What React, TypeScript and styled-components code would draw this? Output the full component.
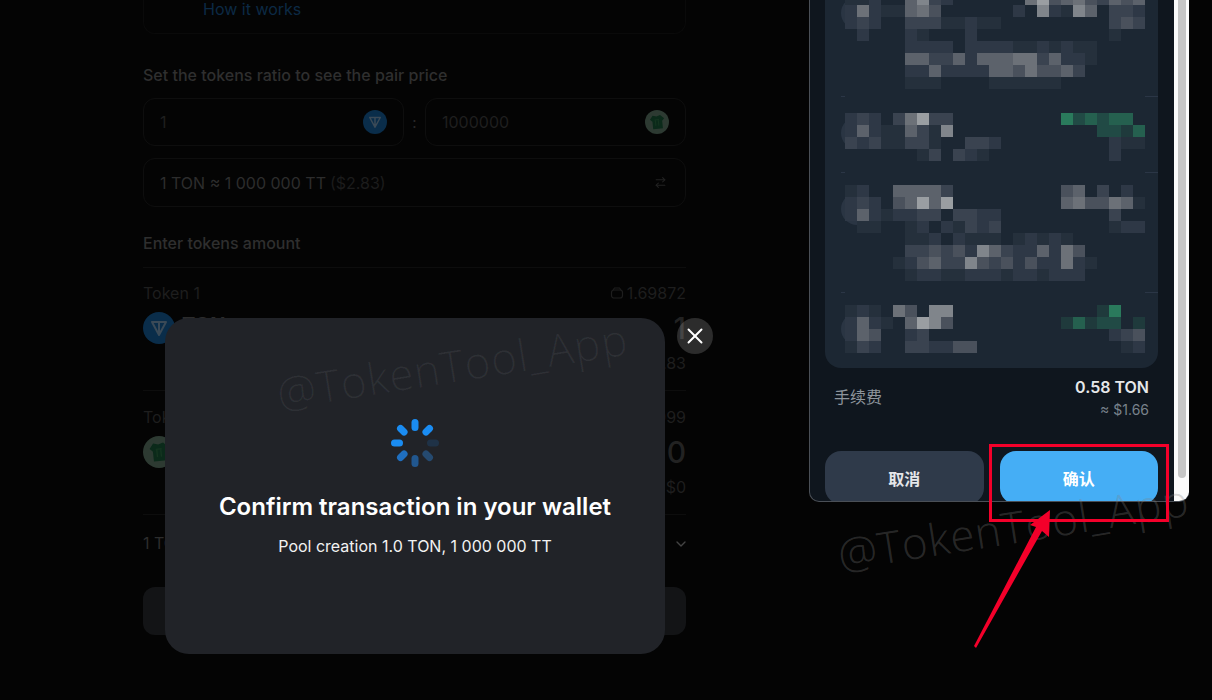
import React from 'react';
import styled, { createGlobalStyle } from 'styled-components';
import { ArrowRightLeft, ChevronDown, X } from 'lucide-react';

const GlobalStyle = createGlobalStyle`
  html, body {
    margin: 0;
    padding: 0;
    background: #040404;
    font-family: Inter, "Noto Sans CJK SC", sans-serif;
  }
`;

const Page = styled.div`
  position: relative;
  display: flex;
  align-items: flex-start;
  width: 1212px;
  height: 700px;
  overflow: hidden;
  background: #040404;
`;

/* dimmed page behind the modal */
const Column = styled.div`
  display: flex;
  flex-direction: column;
  width: 543px;
  margin-left: 143px;
`;

const HowCard = styled.div`
  box-sizing: border-box;
  height: 34px;
  padding-left: 59px;
  border: 1px solid #0a0a0a;
  border-top: none;
  border-radius: 0 0 12px 12px;
  color: #0c2a45;
  font-size: 16px;
  line-height: 18px;
`;

const SectionTitle = styled.div<{ $top: number }>`
  margin-top: ${p => p.$top}px;
  color: #2f2f2f;
  font-size: 16px;
  font-weight: 500;
  line-height: 20px;
`;

const RatioRow = styled.div`
  display: flex;
  align-items: center;
  margin-top: 13px;
`;

const Field = styled.div`
  flex: 1;
  box-sizing: border-box;
  display: flex;
  align-items: center;
  justify-content: space-between;
  height: 48px;
  padding: 0 16px;
  border: 1px solid #0e0e0e;
  border-radius: 12px;
  color: #1f1f1f;
  font-size: 16px;
`;

const Colon = styled.div`
  width: 21px;
  color: #2a2a2a;
  font-size: 15px;
  text-align: center;
`;

const PriceRow = styled.div`
  box-sizing: border-box;
  display: flex;
  align-items: center;
  height: 49px;
  margin-top: 12px;
  padding: 0 18px 0 16px;
  border: 1px solid #0e0e0e;
  border-radius: 12px;
  color: #2d2d2d;
  font-size: 16px;
`;

const PriceUsd = styled.span`
  margin-left: 4px;
  margin-right: auto;
  color: #1c1c1c;
`;

const AmountTitle = styled(SectionTitle)`
  padding-bottom: 14px;
  border-bottom: 1px solid #0d0d0d;
`;

const TokenBlock = styled.div<{ $pad: number; $height: number }>`
  box-sizing: border-box;
  display: flex;
  flex-direction: column;
  height: ${p => p.$height}px;
  padding-top: ${p => p.$pad}px;
  border-bottom: 1px solid #0d0d0d;
`;

const TokenHead = styled.div`
  display: flex;
  justify-content: space-between;
  align-items: center;
  height: 20px;
  color: #1e1e1e;
  font-size: 16px;
`;

const Balance = styled.span`
  display: flex;
  align-items: center;
  gap: 3px;
`;

const TokenMain = styled.div`
  display: flex;
  align-items: center;
  justify-content: space-between;
  height: 34px;
  margin-top: 8px;
`;

const TokenName = styled.div`
  display: flex;
  align-items: flex-start;
  gap: 7px;
  height: 34px;
  color: #2c2c2c;
  font-size: 20px;
  font-weight: 700;
  line-height: 29px;

  svg {
    margin-top: 1px;
  }
`;

const TokenAmount = styled.div`
  color: #222;
  font-size: 30px;
  font-weight: 500;
`;

const TokenUsd = styled.div`
  margin-top: 8px;
  color: #1e1e1e;
  font-size: 16px;
  line-height: 20px;
  text-align: right;
`;

const RateRow = styled.div`
  display: flex;
  align-items: center;
  justify-content: space-between;
  height: 56px;
  color: #2d2d2d;
  font-size: 16px;

  svg {
    margin: 2px -3px 0 0;
  }
`;

const GhostButton = styled.div`
  height: 48px;
  margin-top: 16px;
  border-radius: 12px;
  background: #131416;
`;

/* wallet window on the right */
const Wallet = styled.div`
  box-sizing: border-box;
  display: flex;
  width: 380px;
  height: 502px;
  margin-left: 123px;
  overflow: hidden;
  border-left: 1px solid #4a4f56;
  border-bottom: 1px solid #4a4f56;
  border-bottom-left-radius: 10px;
  border-bottom-right-radius: 10px;
  background: #0f161e;
`;

const WalletBody = styled.div`
  flex: 1;
  box-sizing: border-box;
  padding: 0 16px 0 15px;
`;

const Scrollbar = styled.div`
  box-sizing: border-box;
  width: 15px;
  height: 100%;
  padding: 0 3px 23px 4px;
  background: #fbfbfb;
`;

const ScrollThumb = styled.div`
  height: 100%;
  border-radius: 0 0 4px 4px;
  background: #c6c6c6;
`;

const BlurCard = styled.div`
  height: 368px;
  overflow: hidden;
  border-radius: 0 0 16px 16px;
  background: #1c2733;
`;

const FeeRow = styled.div`
  display: flex;
  align-items: center;
  justify-content: space-between;
  height: 44px;
  margin-top: 8px;
  padding: 0 9px;
`;

const FeeLabel = styled.div`
  margin-bottom: 5px;
  color: #8d949c;
  font-size: 16px;
`;

const FeeValues = styled.div`
  display: flex;
  flex-direction: column;
  align-items: flex-end;
  gap: 5px;
`;

const FeeMain = styled.div`
  color: #e6e8ea;
  font-size: 16px;
  font-weight: 600;
  line-height: 18px;
`;

const FeeSub = styled.div`
  color: #79828c;
  font-size: 14px;
  line-height: 18px;
`;

const Actions = styled.div`
  display: flex;
  gap: 16px;
  margin-top: 31px;
`;

const ActionButton = styled.div<{ $primary?: boolean }>`
  flex: 1;
  display: flex;
  align-items: center;
  justify-content: center;
  height: 53px;
  border-radius: 16px;
  background: ${p => (p.$primary ? '#45aef5' : '#2f3a4a')};
  color: ${p => (p.$primary ? '#fff' : '#e4e6e9')};
  font-size: 16px;
  font-weight: 700;
`;

/* things lying over the page */
const Modal = styled.div`
  position: absolute;
  left: 165px;
  top: 318px;
  box-sizing: border-box;
  display: flex;
  flex-direction: column;
  align-items: center;
  width: 500px;
  height: 336px;
  padding-top: 100px;
  border-radius: 24px;
  background: #212328;
`;

const ModalTitle = styled.div`
  margin-top: 24px;
  color: #fff;
  font-size: 24px;
  font-weight: 600;
  line-height: 30px;
`;

const ModalText = styled.div`
  margin-top: 12px;
  color: #f2f2f2;
  font-size: 16px;
  line-height: 24px;
`;

const CloseButton = styled.div`
  position: absolute;
  left: 677px;
  top: 318px;
  display: flex;
  align-items: center;
  justify-content: center;
  width: 36px;
  height: 36px;
  border-radius: 50%;
  background: rgba(255, 255, 255, 0.16);
  color: #fff;
`;

const Watermark = styled.div<{ $left: number; $top: number; $color: string }>`
  position: absolute;
  left: ${p => p.$left}px;
  top: ${p => p.$top}px;
  color: ${p => p.$color};
  font-family: "Open Sans", sans-serif;
  font-size: 44px;
  font-weight: 300;
  letter-spacing: 1px;
  line-height: 56px;
  white-space: nowrap;
  transform: rotate(-9deg);
  transform-origin: left center;
`;

const RedBox = styled.div`
  position: absolute;
  left: 989px;
  top: 444px;
  box-sizing: border-box;
  width: 180px;
  height: 78px;
  border: 3px solid #f4002a;
`;

const ArrowMark = styled.svg`
  position: absolute;
  left: 960px;
  top: 500px;
`;

const MOSAIC_COLORS: Record<string, string> = {
  '1': '#25303c',
  '2': '#2e3846',
  '3': '#3a4350',
  '4': '#4a515c',
  '5': '#5c626b',
  '6': '#6c7178',
  '7': '#80858b',
  '8': '#9a9ea2',
  a: '#2a7a5c',
  b: '#25604f',
  c: '#214a45',
  d: '#1f3a3c',
};

// rows of the blurred transaction list, first entry is the row index
const MOSAIC_ROWS: [number, string][] = [
  [-1, '112..5732......6845643545'],
  [0, '26211564......2.72175.332'],
  [1, '232..33311211.........343'],
  [2, '.2...21...2...........1..'],
  [3, '.....2222.22221121211....'],
  [4, '.....5533525556635221....'],
  [5, '.....225222255464453.....'],
  [6, '.....111....111111.......'],
  [9, '232.36833.........acbcbb.'],
  [10, '252115317............ccdb'],
  [11, '32311331..332.........211'],
  [12, '......13.321..........2..'],
  [15, '12..55553.........45.3.2.'],
  [16, '232.45858.........5644651'],
  [17, '25212233.3322.........3..'],
  [18, '.11..12.21323.........122'],
  [19, '.....112.2111.12121......'],
  [20, '.....334342753225264.....'],
  [21, '....12453374342422621....'],
  [22, '.....122112221221222.....'],
  [25, '121.64.77............da..'],
  [26, '2521.5874.........dbdcc.d'],
  [27, '254..23...............234'],
  [28, '132..332244............12'],
];

const AVATAR_Y = [13, 133, 209, 329];
const RULE_Y = [96, 172, 292];

const Mosaic = () => (
  <svg width="333" height="368" viewBox="0 0 333 368">
    {AVATAR_Y.map(y => (
      <circle key={y} cx="32" cy={y} r="16" fill="#2a3543" />
    ))}
    {RULE_Y.map(y => (
      <g key={y} fill="#2b3646">
        <rect x="16" y={y} width="4" height="1" />
        <rect x="320" y={y} width="13" height="1" />
      </g>
    ))}
    {MOSAIC_ROWS.map(([row, cells]) =>
      cells.split('').map((c, col) =>
        c === '.' ? null : (
          <rect key={`${row}-${col}`} x={20 + col * 12} y={5 + row * 12} width="12" height="12" fill={MOSAIC_COLORS[c]} />
        ),
      ),
    )}
  </svg>
);

const BAR_COLORS = ['#1a8cf2', '#1a8cf2', '#1f3247', '#254a70', '#21578f', '#1f6fc0', '#1a8cf2', '#1a8cf2'];

const Spinner = () => (
  <svg width="50" height="50" viewBox="-25 -25 50 50">
    {BAR_COLORS.map((color, i) => (
      <rect key={i} x="-3.5" y="-24" width="7" height="12" rx="3.5" fill={color} transform={`rotate(${i * 45})`} />
    ))}
  </svg>
);

const TonIcon = ({ size }: { size: number }) => (
  <svg width={size} height={size} viewBox="0 0 32 32">
    <circle cx="16" cy="16" r="16" fill="#0a2d4a" />
    <path d="M9 10h14l-7 13z M16 10v13" fill="none" stroke="#3b4a57" strokeWidth="2" strokeLinejoin="round" />
  </svg>
);

const ShirtIcon = ({ size }: { size: number }) => (
  <svg width={size} height={size} viewBox="0 0 32 32">
    <circle cx="16" cy="16" r="16" fill="#2d3a32" />
    <g transform="rotate(-6 16 16)">
      <path d="M11 7l5 1.5L21 7l5 5-3 3v10H10V15l-3-3z" fill="#0b2a1a" />
      <path d="M13 13h6M14 13v8M18 13v8" stroke="#153520" strokeWidth="1.4" />
    </g>
  </svg>
);

const WalletGlyph = () => (
  <svg width="14" height="14" viewBox="0 0 14 14" fill="none" stroke="#1e1e1e" strokeWidth="1.2">
    <path d="M3 4l1.5-2h5L11 4" />
    <rect x="1.5" y="4" width="11" height="8" rx="2.5" />
  </svg>
);

const App = () => {
  return (
    <Page>
      <GlobalStyle />
      <Column>
        <HowCard>How it works</HowCard>
        <SectionTitle $top={31}>Set the tokens ratio to see the pair price</SectionTitle>
        <RatioRow>
          <Field>
            1
            <TonIcon size={24} />
          </Field>
          <Colon>:</Colon>
          <Field>
            1000000
            <ShirtIcon size={24} />
          </Field>
        </RatioRow>
        <PriceRow>
          1 TON ≈ 1 000 000 TT
          <PriceUsd>($2.83)</PriceUsd>
          <ArrowRightLeft size={13} color="#222" />
        </PriceRow>
        <AmountTitle $top={26}>Enter tokens amount</AmountTitle>
        <TokenBlock $pad={15} $height={123}>
          <TokenHead>
            Token 1
            <Balance>
              <WalletGlyph />
              1.69872
            </Balance>
          </TokenHead>
          <TokenMain>
            <TokenName>
              <TonIcon size={32} />
              TON
            </TokenName>
            <TokenAmount>1</TokenAmount>
          </TokenMain>
          <TokenUsd>$2.83</TokenUsd>
        </TokenBlock>
        <TokenBlock $pad={16} $height={124}>
          <TokenHead>
            Token 2
            <Balance>999</Balance>
          </TokenHead>
          <TokenMain>
            <TokenName>
              <ShirtIcon size={32} />
              TT
            </TokenName>
            <TokenAmount>0</TokenAmount>
          </TokenMain>
          <TokenUsd>$0</TokenUsd>
        </TokenBlock>
        <RateRow>
          1 TON
          <ChevronDown size={16} color="#444" />
        </RateRow>
        <GhostButton />
      </Column>

      <Wallet>
        <WalletBody>
          <BlurCard>
            <Mosaic />
          </BlurCard>
          <FeeRow>
            <FeeLabel>手续费</FeeLabel>
            <FeeValues>
              <FeeMain>0.58 TON</FeeMain>
              <FeeSub>≈ $1.66</FeeSub>
            </FeeValues>
          </FeeRow>
          <Actions>
            <ActionButton>取消</ActionButton>
            <ActionButton $primary>确认</ActionButton>
          </Actions>
        </WalletBody>
        <Scrollbar>
          <ScrollThumb />
        </Scrollbar>
      </Wallet>

      <Modal>
        <Spinner />
        <ModalTitle>Confirm transaction in your wallet</ModalTitle>
        <ModalText>Pool creation 1.0 TON, 1 000 000 TT</ModalText>
      </Modal>
      <CloseButton>
        <X size={26} strokeWidth={1.8} />
      </CloseButton>

      <Watermark $left={277} $top={365} $color="rgba(255,255,255,0.06)">@TokenTool_App</Watermark>
      <Watermark $left={838} $top={526} $color="rgba(128,128,128,0.3)">@TokenTool_App</Watermark>

      <RedBox />
      <ArrowMark width="100" height="160" viewBox="960 500 100 160">
        <polygon points="974,646 1036,527 1030,525 1050,510 1049,537 1042,531 976,648" fill="#f4002a" />
      </ArrowMark>
    </Page>
  );
};

export default App;
